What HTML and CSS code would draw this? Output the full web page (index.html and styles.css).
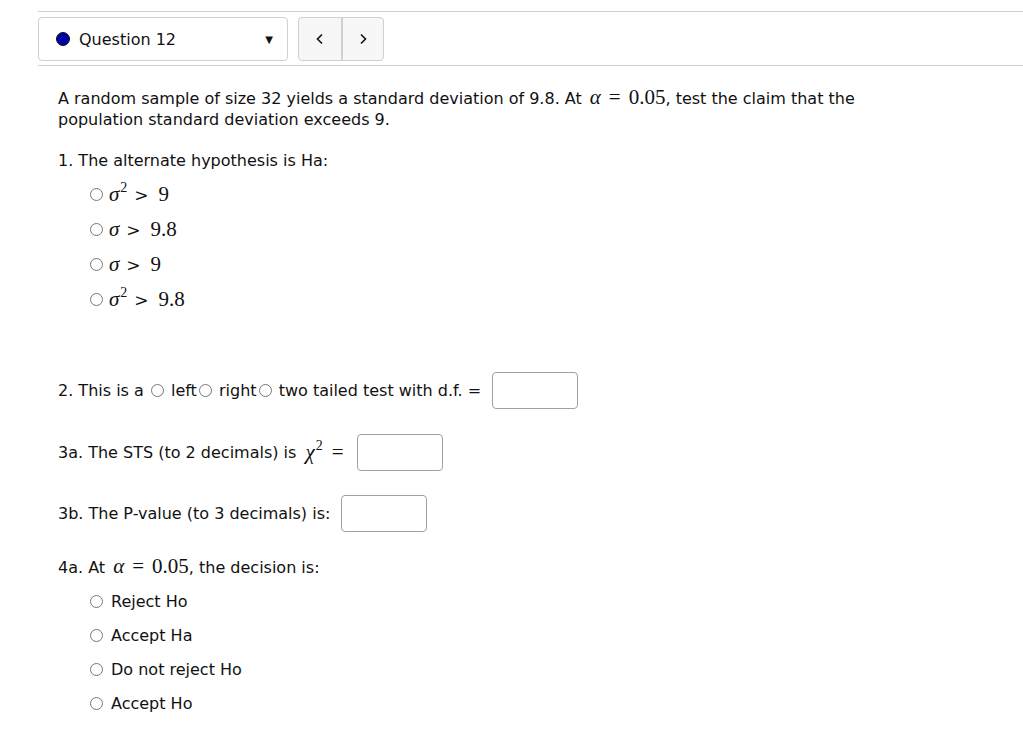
FILE: index.html
```html
<!DOCTYPE html>
<html>
<head>
<meta charset="utf-8">
<link rel="stylesheet" href="styles.css">
</head>
<body>
<div class="page">
  <div class="header">
    <div class="qselect">
      <span class="dot"></span>
      <span class="qlabel">Question 12</span>
      <span class="caret">&#9660;</span>
    </div>
    <div class="nav">
      <div class="navbtn"><svg width="10" height="12" viewBox="0 0 10 12"><path d="M7 1.5 L2.5 6 L7 10.5" fill="none" stroke="#111" stroke-width="1.6"/></svg></div>
      <div class="navbtn"><svg width="10" height="12" viewBox="0 0 10 12"><path d="M3 1.5 L7.5 6 L3 10.5" fill="none" stroke="#111" stroke-width="1.6"/></svg></div>
    </div>
  </div>

  <div class="question">
    <p class="intro">A random sample of size 32 yields a standard deviation of 9.8. At <span class="m inl"><i>α</i><span class="rel eq">=</span>0.05</span>, test the claim that the population standard deviation exceeds 9.</p>

    <p class="q q1">1. The alternate hypothesis is Ha:</p>
    <div class="opts math-opts">
      <div class="opt"><span class="radio"></span><span class="m"><i>σ</i><sup>2</sup><span class="rel gt">&gt;</span>9</span></div>
      <div class="opt"><span class="radio"></span><span class="m"><i>σ</i><span class="rel gt">&gt;</span>9.8</span></div>
      <div class="opt"><span class="radio"></span><span class="m"><i>σ</i><span class="rel gt">&gt;</span>9</span></div>
      <div class="opt"><span class="radio"></span><span class="m"><i>σ</i><sup>2</sup><span class="rel gt">&gt;</span>9.8</span></div>
    </div>

    <div class="q q2">2. This is a <span class="radio small"></span> left<span class="radio small"></span> right<span class="radio small"></span> two tailed test with d.f. = <span class="box"></span></div>

    <div class="q q3a">3a. The STS (to 2 decimals) is <span class="m"><i>χ</i><sup>2</sup><span class="rel eq">=</span></span><span class="box"></span></div>

    <div class="q q3b">3b. The P-value (to 3 decimals) is: <span class="box"></span></div>

    <p class="q q4">4a. At <span class="m inl"><i>α</i><span class="rel eq">=</span>0.05</span>, the decision is:</p>
    <div class="opts text-opts">
      <div class="opt"><span class="radio"></span><span>Reject Ho</span></div>
      <div class="opt"><span class="radio"></span><span>Accept Ha</span></div>
      <div class="opt"><span class="radio"></span><span>Do not reject Ho</span></div>
      <div class="opt"><span class="radio"></span><span>Accept Ho</span></div>
    </div>
  </div>
</div>
</body>
</html>
```

FILE: styles.css
```css
* { box-sizing: border-box; }
html, body { margin: 0; padding: 0; background: #fff; }
body {
  font-family: "DejaVu Sans", "Noto Sans", sans-serif;
  font-size: 16px;
  line-height: 21px;
  color: #111;
}
.page { padding-top: 11px; padding-left: 38px; }
.header {
  border-top: 1px solid #cfcfcf;
  border-bottom: 1px solid #cfcfcf;
  display: flex;
  align-items: center;
  gap: 10px;
  padding: 5px 0 4px 0;
}
.qselect {
  width: 250px;
  height: 44px;
  border: 1px solid #d0d0d0;
  border-radius: 4px;
  display: flex;
  align-items: center;
  padding: 0 14px 0 17px;
  background: #fff;
}
.dot {
  width: 14px; height: 14px;
  border-radius: 50%;
  background: #0000a8;
  border: 1px solid #111;
  margin-right: 9px;
}
.qlabel { flex: 1; }
.caret { font-size: 10px; color: #111; }
.nav {
  display: flex;
  height: 44px;
  border: 1px solid #d0d0d0;
  border-radius: 4px;
  background: #f7f7f7;
  overflow: hidden;
}
.navbtn {
  width: 42px;
  display: flex; align-items: center; justify-content: center;
}
.navbtn + .navbtn { border-left: 2px solid #d0d0d0; }

.question { padding-left: 20px; padding-top: 21px; }
p { margin: 0; }
.intro { max-width: 830px; }
.m {
  font-family: "Liberation Serif", "DejaVu Serif", serif;
  font-size: 21px;
  line-height: 1;
}
.inl { margin-left: 3px; }
.m i { font-style: italic; }
.eq { margin: 0 8px; }
.gt {
  font-family: "DejaVu Serif", "Liberation Serif", serif;
  font-size: 17px;
  margin: 0 10px 0 7px;
}
.m sup { font-size: 14px; line-height: 0; vertical-align: 9px; margin-left: 1px; }

.q1 { margin-top: 20px; }
.opts { padding-left: 32px; display: flex; flex-direction: column; }
.math-opts { margin-top: 13px; gap: 14px; }
.math-opts .opt { gap: 6px; }
.opt { display: flex; align-items: center; height: 21px; gap: 8px; }
.radio {
  display: inline-block;
  width: 13px; height: 13px;
  border: 1px solid #777;
  border-radius: 50%;
  background: #fff;
  flex: none;
}
.box {
  display: inline-block;
  width: 86px; height: 37px;
  border: 1px solid #a0a0a0;
  border-radius: 4px;
  flex: none;
}
.q2 { margin-top: 62px; display: flex; align-items: center; white-space: pre; }
.q2 .box { margin-left: 6px; }
.q2 .radio { margin: 0 2px; }
.q3a { margin-top: 25px; display: flex; align-items: center; white-space: pre; }
.q3a .m { margin-left: 4px; }
.q3a .eq { margin: 0 13px 0 9px; }
.q3b { margin-top: 24px; display: flex; align-items: center; white-space: pre; }
.q3b .box { margin-left: 6px; }
.q4 { margin-top: 24px; }
.text-opts { margin-top: 13px; gap: 13px; }
```
